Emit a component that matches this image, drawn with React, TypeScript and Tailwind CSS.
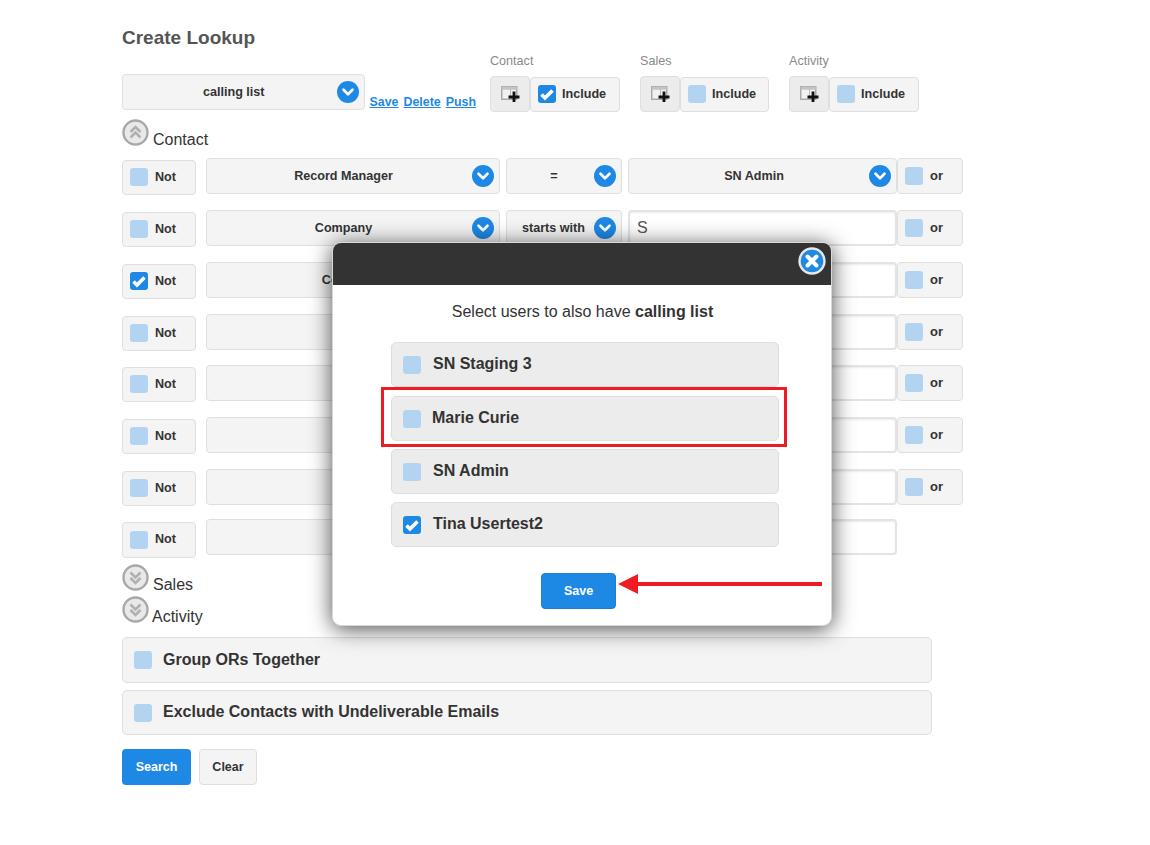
import { ChevronDown } from "lucide-react";

function Box({ on }: { on?: boolean }) {
  return (
    <span className={`flex h-[18px] w-[18px] shrink-0 items-center justify-center rounded-[3px] ${on ? "bg-[#1e88e5]" : "bg-[#b3d4f0]"}`}>
      {on && (
        <svg width="16" height="16" viewBox="0 0 16 16" fill="none">
          <path d="M2.500 8.500 6 12 13.500 4.500" stroke="#fff" strokeWidth="3.600" />
        </svg>
      )}
    </span>
  );
}

function Drop({ label, className, pad }: { label: string; className: string; pad?: string }) {
  return (
    <div className={`flex h-[36px] items-center rounded-[4px] border border-[#dfdfdf] bg-[#f4f4f4] text-[12.6px] font-bold text-[#333] ${className}`}>
      <span className={`flex-1 text-center ${pad ?? ""}`}>{label}</span>
      <span className="mr-[5px] flex h-[22px] w-[22px] shrink-0 items-center justify-center rounded-full bg-[#1e88e5]">
        <ChevronDown className="h-[18px] w-[18px] text-white" strokeWidth={3.5} />
      </span>
    </div>
  );
}

function NotBox({ on, last }: { on?: boolean; last?: boolean }) {
  return (
    <div className={`flex w-[74px] shrink-0 items-center gap-[7px] rounded-[4px] border border-[#dfdfdf] bg-[#f4f4f4] pb-[1px] pl-[7px] text-[12.6px] font-bold text-[#333] ${last ? "mt-[3px] h-[36px]" : "mt-[2px] h-[35px]"}`}>
      <Box on={on} />
      Not
    </div>
  );
}

function OrBox() {
  return (
    <div className="flex h-[36px] w-[66px] shrink-0 items-center gap-[7px] rounded-[4px] border border-[#dfdfdf] bg-[#f4f4f4] pl-[7px] text-[13px] font-bold text-[#333]">
      <Box />
      or
    </div>
  );
}

function Field({ value }: { value?: string }) {
  return (
    <div className="ml-[6px] flex h-[36px] w-[269px] items-center rounded-[4px] border-2 border-[#e4e4e4] bg-white pl-[7px] text-[16px] text-[#555] shadow-[inset_0_1px_2px_rgba(0,0,0,0.08)]">
      {value}
    </div>
  );
}

type RowData = { not?: boolean; field?: string; op?: string; value?: string; select?: boolean; or?: boolean; h: number };

const rows: RowData[] = [
  { field: "Record Manager", op: "=", value: "SN Admin", select: true, or: true, h: 52 },
  { field: "Company", op: "starts with", value: "S", or: true, h: 52 },
  { not: true, field: "County", op: "", or: true, h: 52 },
  { field: "", op: "", or: true, h: 51 },
  { field: "", op: "", or: true, h: 52 },
  { field: "", op: "", or: true, h: 52 },
  { field: "", op: "", or: true, h: 50 },
  { field: "", op: "", h: 45 },
];

function Row({ r }: { r: RowData }) {
  return (
    <div className="flex items-start" style={{ height: r.h }}>
      <NotBox on={r.not} last={!r.or} />
      <Drop label={r.field ?? ""} className="ml-[10px] w-[294px]" pad="pl-[8px]" />
      <Drop label={r.op ?? ""} className="ml-[6px] w-[116px]" pad={r.op === "=" ? "pl-[7px]" : "pl-[6px]"} />
      {r.select ? <Drop label={r.value ?? ""} className="ml-[6px] w-[269px]" pad="pl-[10px]" /> : <Field value={r.value} />}
      {r.or && <OrBox />}
    </div>
  );
}

function Toggle({ up }: { up?: boolean }) {
  return (
    <svg width="27" height="27" viewBox="0 0 27 27" className="shrink-0" fill="none">
      <circle cx="13.500" cy="13.500" r="12" fill="#e9e9e9" stroke="#a8a8a8" strokeWidth="2.400" />
      <g stroke="#b0b0b0" strokeWidth="2.600" transform={up ? undefined : "rotate(180 13.500 13.500)"}>
        <path d="M8.500 13 13.500 8 18.500 13" />
        <path d="M8.500 18.500 13.500 13.500 18.500 18.500" />
      </g>
    </svg>
  );
}

function TableIcon() {
  return (
    <svg width="19" height="16" viewBox="0 0 19 16" fill="none">
      <path d="M.75.75h15v12.500h-15z" stroke="#aaa" strokeWidth="1.500" fill="#f2f2f2" />
      <path d="M.75.75h15v3h-15z" fill="#c4c4c4" />
      <path d="M9.500 3v10" stroke="#bbb" />
      <path d="M13 5.500v10.500M7.500 11H18.500" stroke="#111" strokeWidth="2.800" />
    </svg>
  );
}

function IncludeGroup({ label, on, w, gap }: { label: string; on?: boolean; w: string; gap: string }) {
  return (
    <div className={gap}>
      <div className="mb-[8px] text-[12.6px] leading-[14px] text-[#8a8a8a]">{label}</div>
      <div className="flex items-start">
        <div className="flex h-[36px] w-[40px] items-center justify-center rounded-[4px] border border-[#dfdfdf] bg-[#ececec]">
          <TableIcon />
        </div>
        <div className={`mt-[1px] flex h-[35px] items-center gap-[6px] rounded-[4px] border border-[#dfdfdf] bg-[#f4f4f4] pb-[1px] pl-[7px] text-[12.6px] font-bold text-[#333] ${w}`}>
          <Box on={on} />
          Include
        </div>
      </div>
    </div>
  );
}

function Wide({ label, className, textClass }: { label: string; className: string; textClass?: string }) {
  return (
    <div className={`flex w-[810px] items-center gap-[11px] rounded-[5px] border border-[#dfdfdf] bg-[#f4f4f4] pl-[11px] text-[16px] font-bold text-[#333] ${className}`}>
      <Box />
      <span className={textClass}>{label}</span>
    </div>
  );
}

function UserRow({ name, on, className, gap }: { name: string; on?: boolean; className: string; gap: string }) {
  return (
    <div className={`flex h-[45px] items-center rounded-[5px] border border-[#dedede] bg-[#ececec] pl-[11px] text-[16px] font-bold text-[#333] ${gap} ${className}`}>
      <Box on={on} />
      <span className="pb-[2px]">{name}</span>
    </div>
  );
}

function CloseIcon() {
  return (
    <svg width="28" height="28" viewBox="0 0 28 28" fill="none">
      <circle cx="14" cy="14" r="12.500" fill="#1e88e5" stroke="#e8e8e8" strokeWidth="2.400" />
      <path d="M9.500 9.500 18.500 18.500M18.500 9.500 9.500 18.500" stroke="#fff" strokeWidth="4" strokeLinecap="round" />
    </svg>
  );
}

export default function App() {
  return (
    <div className="relative min-h-[845px] bg-white pl-[122px] pt-[27px] font-['Liberation_Sans',Arial,sans-serif] text-[#333]">
      <h1 className="h-[21px] text-[19px] font-bold leading-[22px] text-[#555]">Create Lookup</h1>

      <div className="flex h-[71px] items-start">
        <div className="mt-[26px] flex w-[354px] items-end">
          <Drop label="calling list" className="w-[243px]" pad="pl-[8px]" />
          <div className="ml-[5px] flex gap-[5px] pb-[1px] text-[12.4px] font-bold leading-[14px] text-[#1e88e5] underline">
            <span>Save</span>
            <span>Delete</span>
            <span>Push</span>
          </div>
        </div>
        <div className="ml-[14px] mt-[6px] flex">
          <IncludeGroup label="Contact" on w="w-[90px]" gap="mr-[20px]" />
          <IncludeGroup label="Sales" w="w-[89px]" gap="mr-[20px]" />
          <IncludeGroup label="Activity" w="w-[90px]" gap="" />
        </div>
      </div>

      <div className="flex h-[39px] items-start">
        <Toggle up />
        <span className="ml-[4px] mt-[11px] text-[16px] leading-[20px]">Contact</span>
      </div>

      {rows.map((r, i) => (
        <Row key={i} r={r} />
      ))}

      <div className="flex h-[32px] items-start">
        <Toggle />
        <span className="ml-[4px] mt-[11px] text-[16px] leading-[20px]">Sales</span>
      </div>
      <div className="flex h-[41px] items-start">
        <Toggle />
        <span className="ml-[3px] mt-[11px] text-[16px] leading-[20px]">Activity</span>
      </div>

      <Wide label="Group ORs Together" className="h-[46px]" />
      <Wide label="Exclude Contacts with Undeliverable Emails" className="mt-[7px] h-[45px]" textClass="pb-[2px]" />

      <div className="mt-[14px] flex gap-[8px] text-[12.5px] font-bold">
        <button className="h-[36px] w-[69px] rounded-[4px] bg-[#1e88e5] text-white">Search</button>
        <button className="h-[36px] w-[58px] rounded-[4px] border border-[#dfdfdf] bg-[#f4f4f4] text-[#333]">Clear</button>
      </div>

      {/* modal sits over the form */}
      <div className="absolute left-[332px] top-[242px] h-[384px] w-[500px] overflow-hidden rounded-[9px] border border-[#d8d8d8] bg-white shadow-[0_3px_22px_rgba(0,0,0,0.7)]">
        <div className="flex h-[42px] items-start justify-end bg-[#333] pr-[5px] pt-[4px]">
          <CloseIcon />
        </div>
        <p className="mt-[17px] pl-[1px] text-center text-[16px] leading-[20px]">
          Select users to also have <b>calling list</b>
        </p>
        <div className="ml-[58px] mt-[20px] w-[388px]">
          <UserRow name="SN Staging 3" className="" gap="gap-[12px]" />
          <UserRow name="Marie Curie" className="mt-[9px]" gap="gap-[11px]" />
          <UserRow name="SN Admin" className="mt-[8px]" gap="gap-[12px]" />
          <UserRow name="Tina Usertest2" on className="mt-[8px]" gap="gap-[12px]" />
        </div>
        <button className="ml-[208px] mt-[26px] h-[36px] w-[75px] rounded-[4px] border border-[#1a7fd6] bg-[#1e88e5] text-[12.5px] font-bold text-white">Save</button>
      </div>

      {/* annotation marks */}
      <div className="absolute left-[381px] top-[387px] h-[60px] w-[406px] border-[3px] border-[#ed1c24]" />
      <svg className="absolute left-[618px] top-[572px]" width="206" height="24" viewBox="0 0 206 24">
        <path d="M0 12 20 2V10H204V14H20V22Z" fill="#ed1c24" />
      </svg>
    </div>
  );
}
